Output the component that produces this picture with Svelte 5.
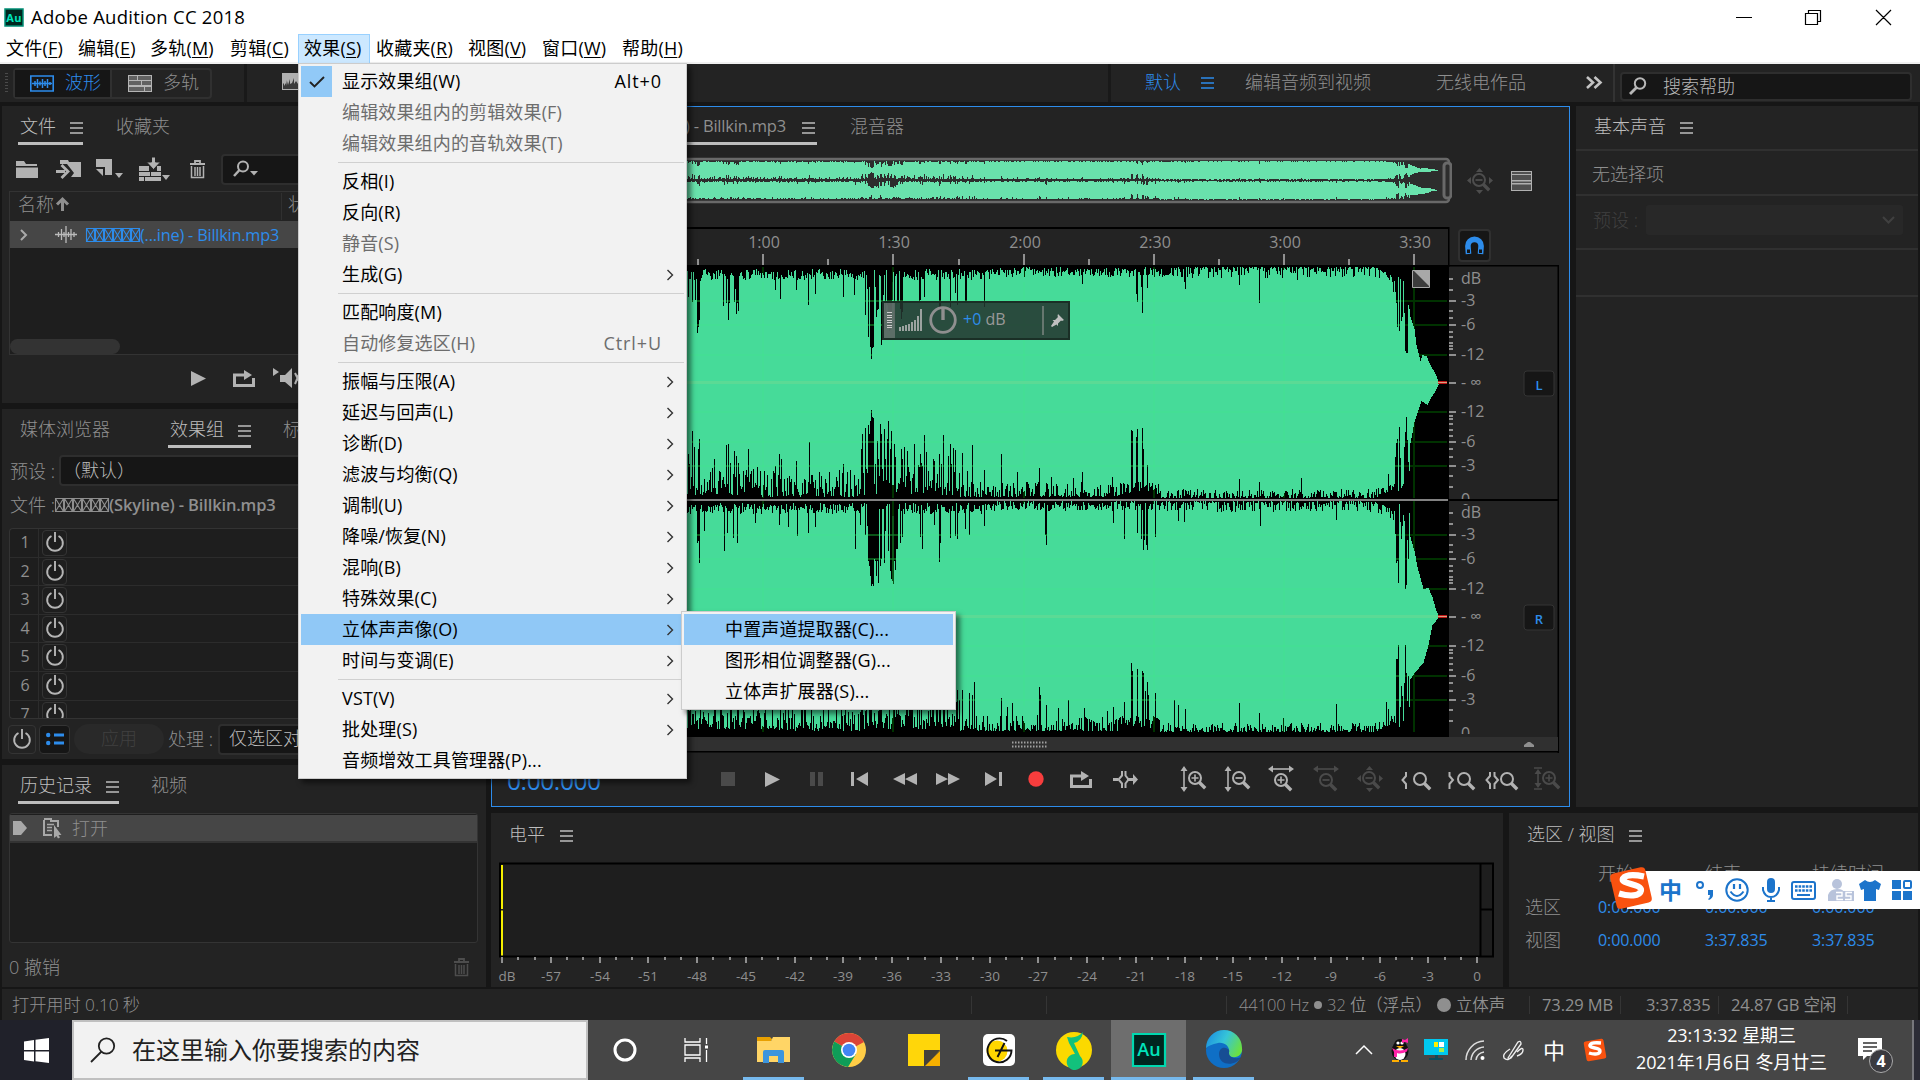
<script>
  const menubar = [['文件', 'F'], ['编辑', 'E'], ['多轨', 'M'], ['剪辑', 'C'], ['效果', 'S'], ['收藏夹', 'R'], ['视图', 'V'], ['窗口', 'W'], ['帮助', 'H']];

  // t: label, k: shortcut, off: disabled, sub: has submenu
  const effectsMenu = [
    { t: '显示效果组(W)', k: 'Alt+0', check: true },
    { t: '编辑效果组内的剪辑效果(F)', off: true },
    { t: '编辑效果组内的音轨效果(T)', off: true },
    null,
    { t: '反相(I)' }, { t: '反向(R)' }, { t: '静音(S)', off: true }, { t: '生成(G)', sub: true },
    null,
    { t: '匹配响度(M)' }, { t: '自动修复选区(H)', k: 'Ctrl+U', off: true },
    null,
    { t: '振幅与压限(A)', sub: true }, { t: '延迟与回声(L)', sub: true }, { t: '诊断(D)', sub: true },
    { t: '滤波与均衡(Q)', sub: true }, { t: '调制(U)', sub: true }, { t: '降噪/恢复(N)', sub: true },
    { t: '混响(B)', sub: true }, { t: '特殊效果(C)', sub: true }, { t: '立体声声像(O)', sub: true, hot: true },
    { t: '时间与变调(E)', sub: true },
    null,
    { t: 'VST(V)', sub: true }, { t: '批处理(S)', sub: true }, { t: '音频增效工具管理器(P)...' }
  ];
  const submenu = ['中置声道提取器(C)...', '图形相位调整器(G)...', '立体声扩展器(S)...'];

  const lens = (x, y, r = 6) => `<circle cx="${x}" cy="${y}" r="${r}" fill="none" stroke="currentColor" stroke-width="2"/><path d="M${x + r * .7} ${y + r * .7}l6 6" stroke="currentColor" stroke-width="3.4"/>`;
  const plus = (x, y) => `<path d="M${x - 3.5} ${y}h7M${x} ${y - 3.5}v7" stroke="currentColor" stroke-width="1.6"/>`;
  const minus = (x, y) => `<path d="M${x - 3.5} ${y}h7" stroke="currentColor" stroke-width="1.8"/>`;
  const vArrow = '<path d="M4 4v18" stroke="currentColor" stroke-width="1.6"/><path d="M4 0l3.5 5h-7zM4 26l3.5-5h-7z" fill="currentColor"/>';
  const hArrow = '<path d="M4 3h18" stroke="currentColor" stroke-width="1.6"/><path d="M0 3l5-3.5v7zM26 3l-5-3.5v7z" fill="currentColor"/>';
  const icons = {
    burger: [13, 12, '<path d="M0 1h13M0 6h13M0 11h13" stroke="currentColor" stroke-width="1.6"/>'],
    wave: [24, 17, '<path d="M0 1h24M0 16h24M.8 1v15M23.2 1v15" stroke="currentColor" stroke-width="1.6"/><path d="M2 8.500h20M5 6v5M7.500 4v9M10 6.500v4M12.500 4v9M15 6v5M17.500 4v9M20 7v3" stroke="currentColor" stroke-width="1.500"/>'],
    multi: [24, 17, '<path d="M0 0h24v17H0z" fill="#b5b5b5"/><path d="M1 1h8v4H1zM10 1h13v4H10zM1 6h12v4H1zM14 6h9v4h-9zM1 12h15v4H1zM17 12h6v4h-6z" fill="#616161"/>'],
    folder: [22, 17, '<path d="M0 0h8l2 3h11v2H0zM0 6.500h22V17H0z" fill="currentColor"/>'],
    importer: [25, 18, '<path d="M4 0h8l1 2h12v15H15l3-4-7-9H4z" fill="currentColor"/><path d="M0 11.500h9M5.500 5l6.500 6.500L5.500 18" fill="none" stroke="currentColor" stroke-width="2.800"/>'],
    newfile: [27, 20, '<path d="M0 0h16v16H9V8H0zM0 10h7v7zM19 14h8l-4 5z" fill="currentColor"/>'],
    insert: [31, 24, '<path d="M0 9h10v5H0zM18 9h4v5h-4zM0 15h11v4H0zM12 15h10v4H12zM0 20h5v4H0zM6 20h16v4H6z" fill="currentColor"/><path d="M12.500 0h4v5h5l-7 7.500-7-7.500h5z" fill="currentColor" stroke="#232323"/><path d="M23 18h8l-4 5z" fill="currentColor"/>'],
    trash: [17, 19, '<path d="M1 4h15M6 3.500V1h5v2.500" fill="none" stroke="currentColor" stroke-width="1.800"/><path d="M2.500 6v11.500h12V6M6 7v9M8.500 7v9M11 7v9" fill="none" stroke="currentColor" stroke-width="1.500"/>'],
    find: [26, 18, '<circle cx="10" cy="6.500" r="5" fill="none" stroke="currentColor" stroke-width="2"/><path d="M6.500 10L1 16" stroke="currentColor" stroke-width="2.500"/><path d="M17 11h8l-4 4.500z" fill="currentColor"/>'],
    search: [18, 18, '<circle cx="11" cy="6.500" r="5.200" fill="none" stroke="currentColor" stroke-width="2"/><path d="M7.500 10.500L1 17" stroke="currentColor" stroke-width="2.800"/>'],
    clip: [22, 17, '<path d="M0 8.500h22M3.500 6v5M6.500 3v11M9 6v5M11 0v17M13.500 6v5M16 3v11M19 6v5" stroke="currentColor" stroke-width="1.300"/>'],
    play: [15, 15, '<path d="M0 0l15 7.500L0 15z" fill="currentColor"/>'],
    loop: [22, 17, '<path d="M7 5H1.500v10.500h19V8" fill="none" stroke="currentColor" stroke-width="3"/><path d="M7 3.500h4V0l8 5-8 5V6.500H7z" fill="currentColor"/>'],
    speaker: [30, 20, '<path d="M0 0l6 4-6 4zM7 7h5l7-7v20l-7-6H7z" fill="currentColor"/><path d="M22 5l5 10M27 4l-5 12" stroke="currentColor" stroke-width="2"/>'],
    power: [18, 20, '<path d="M5.500 4A7.800 7.800 0 1 0 12.500 4" fill="none" stroke="currentColor" stroke-width="1.900"/><path d="M9 0v10" stroke="currentColor" stroke-width="1.900"/>'],
    list: [18, 12, '<circle cx="2.200" cy="2" r="2.200" fill="currentColor"/><circle cx="2.200" cy="10" r="2.200" fill="currentColor"/><path d="M8 2h10M8 10h10" stroke="currentColor" stroke-width="3"/>'],
    here: [14, 14, '<path d="M0 0h8l6 7-6 7H0z" fill="currentColor"/>'],
    history: [18, 20, '<path d="M1 2v15h8M1 1h7v2h7v6" fill="none" stroke="currentColor" stroke-width="2"/><path d="M4 6.500h7M4 9.500h5M4 12.500h5" stroke="currentColor" stroke-width="1.500"/><path d="M11 7v13l2.500-2 1.500 2.500 2-1-1.500-2.500h3z" fill="currentColor"/>'],
    stop: [14, 14, '<path d="M0 0h14v14H0z" fill="currentColor"/>'],
    pause: [13, 14, '<path d="M0 0h5v14H0zM8 0h5v14H8z" fill="currentColor"/>'],
    prev: [17, 14, '<path d="M0 0h3v14H0zM17 0v14L5 7z" fill="currentColor"/>'],
    next: [17, 14, '<path d="M14 0h3v14h-3zM0 0v14l12-7z" fill="currentColor"/>'],
    rew: [24, 12, '<path d="M12 0v12L0 6zM24 0v12L12 6z" fill="currentColor"/>'],
    ff: [24, 12, '<path d="M0 0v12l12-6zM12 0v12l12-6z" fill="currentColor"/>'],
    rec: [16, 16, '<circle cx="8" cy="8" r="7.700" fill="#f73d3d"/>'],
    skip: [25, 18, '<path d="M0 8h5v3H0zM14 8h6V4l5 5.500-5 5.500v-4h-6z" fill="currentColor"/><path d="M9 1v4.500L5.500 9.500 9 13.500V18M12.500 1v4.500l3 4-3 4V18" fill="none" stroke="currentColor" stroke-width="2"/>'],
    zinV: [26, 26, vArrow + lens(15, 12) + plus(15, 12)],
    zoutV: [26, 26, vArrow + lens(15, 12) + minus(15, 12)],
    zinH: [27, 26, hArrow + lens(13, 14) + plus(13, 14)],
    zoutH: [27, 26, hArrow + lens(13, 14) + minus(13, 14)],
    zfull: [26, 26, '<path d="M12.500 0l3.500 4H9zM12.500 26l3.500-4H9zM0 12.500l4-3.500v7zM26 12.500L22 9v7z" fill="currentColor"/>' + lens(12, 12) + minus(12, 12)],
    zselL: [30, 26, '<path d="M5 6v4L1.500 14 5 18v5" fill="none" stroke="currentColor" stroke-width="2"/>' + lens(19, 13)],
    zselR: [27, 26, '<path d="M1.500 6v4L5 14l-3.500 4v5" fill="none" stroke="currentColor" stroke-width="2"/>' + lens(16, 13)],
    zsel: [34, 26, '<path d="M5 6v4L1.500 14 5 18v5M9.500 6v4l3.500 4-3.500 4v5" fill="none" stroke="currentColor" stroke-width="2"/>' + lens(22, 13)],
    zinF: [26, 26, '<path d="M0 2h8M0 23h8M4 5v14" stroke="currentColor" stroke-width="1.600"/><path d="M4 3l3.500 5h-7zM4 22l3.500-5h-7z" fill="currentColor"/>' + lens(15, 12) + plus(15, 12)],
    tracks: [21, 20, '<path d="M0 0h21v20H0z" fill="#b0b0b0"/><path d="M1 1h19v2H1zM1 4h19v5H1zM1 10.500h19v1.500H1zM1 13.500h19v5.500H1z" fill="#505050"/>'],
    more: [16, 13, '<path d="M1 1l6 5.500L1 12M8.500 1l6 5.500-6 5.500" fill="none" stroke="currentColor" stroke-width="2.600"/>'],
    magnet: [19, 19, '<path d="M3.500 18l-.6-8a6.600 6.600 0 0 1 13.200 0l-.6 8" fill="none" stroke="currentColor" stroke-width="5.600"/><path d="M2 13.500h3V17H2zM14 13.500h3V17h-3z" fill="#161616"/>'],
    down: [13, 8, '<path d="M1 1l5.500 5.500L12 1" fill="none" stroke="currentColor" stroke-width="2"/>'],
    arrow: [8, 12, '<path d="M1.500 1L6.500 6l-5 5" fill="none" stroke="#333" stroke-width="1.400"/>'],
    check: [16, 12, '<path d="M1 6l4.500 4.500L15 1" fill="none" stroke="#222" stroke-width="1.900"/>'],
    twist: [8, 12, '<path d="M1 1l5 5-5 5" fill="none" stroke="#aaa" stroke-width="2"/>'],
    up: [13, 14, '<path d="M6.500 14V3M1 7.500L6.500 2 12 7.500" fill="none" stroke="currentColor" stroke-width="3"/>'],
    spectral: [24, 17, '<path d="M0 0h24v17H0z" fill="#b0b0b0"/><path d="M1 16v-5l1-1v3l2-3v3l1-6v5l1-4v4l2-6v5l2-1 2-5v6l2-3 2 3v5z" fill="#3a3a3a"/>'],
    box: [9, 14, '<path d="M.5.5h8v13h-8zM.5.5l8 13M8.500.5l-8 13" fill="none" stroke="currentColor" stroke-width="1.100"/>'],
    meter: [23, 22, '<path d="M1 22v-4M4 22v-5M7 22v-6M10 22v-7M13 22v-9M16 22v-11M19 22V7M22 22V0" stroke="#b9b9b9" stroke-width="1.600"/>'],
    knob: [28, 28, '<circle cx="14" cy="14" r="12.300" fill="none" stroke="#8f8f8f" stroke-width="2.800"/><path d="M14 1v13" stroke="#8f8f8f" stroke-width="3.400"/>'],
    pin: [13, 13, '<path d="M7 0l6 6-2 1-1-.5-3 3v2.500L5.500 10.500 1 13l-1-1 3-4.500L1.500 6h2.500l3-3-.5-1z" fill="#c0c0c0"/>'],
    win: [25, 25, '<path d="M0 3.500L10 2v10H0zM11.500 1.800L25 0v12H11.500zM0 13.500h10v10L0 22zM11.500 13.500H25V25l-13.500-1.800z" fill="#fff"/>'],
    glass: [26, 26, '<circle cx="16.500" cy="9" r="7.700" fill="none" stroke="#222" stroke-width="1.800"/><path d="M11.500 14.500L1 25" stroke="#222" stroke-width="1.800"/>'],
    cortana: [24, 24, '<circle cx="12" cy="12" r="10" fill="none" stroke="#fff" stroke-width="3"/>'],
    taskview: [25, 24, '<path d="M1 0v4h15V0M1 24v-4h15v4M1 7h15v10H1zM22.500 0v6M22.500 12v12" fill="none" stroke="#fff" stroke-width="1.300"/><path d="M21 7.500h3v3h-3z" fill="#fff"/>'],
    explorer: [33, 28, '<path d="M0 1h13l3 3h-2v4H0z" fill="#e8a000"/><path d="M0 5h14l2-4h17v25H0z" fill="#ffd566"/><path d="M6 27V16q0-2 2-2h17q2 0 2 2v11h-6v-7h-9v7z" fill="#3d95dd"/>'],
    chrome: [34, 34, '<circle cx="17" cy="17" r="17" fill="#ffcd46"/><path d="M17 17L2.300 8.500A17 17 0 0 1 31.700 8.500L32 9z" fill="#db4437"/><path d="M17 17L2.300 8.500A17 17 0 0 0 16 34l8-13z" fill="#0f9d58"/><circle cx="17" cy="17" r="8" fill="#fff"/><circle cx="17" cy="17" r="6.300" fill="#4285f4"/>'],
    notes: [32, 32, '<path d="M0 0h32v16l-16 16H0z" fill="#ffd60a"/><path d="M16 16h16L18 32h-2z" fill="#45413a"/><path d="M32 17v15H17z" fill="#f6b000"/>'],
    gapp: [32, 32, '<rect width="32" height="32" rx="5" fill="#fff"/><circle cx="14" cy="17" r="10.500" fill="#ffd700"/><path d="M24 7A12 12 0 1 0 28.500 16.500H12M21.500 9l-7 14" fill="none" stroke="#111" stroke-width="1.900"/>'],
    music: [36, 36, '<circle cx="18" cy="18" r="18" fill="#fbd900"/><path d="M11 5q10 2 16-5-1 9-9 11l6 13a8 8 0 1 1-5-2l-6-11z" fill="#12c17c"/>'],
    au: [34, 34, '<path d="M1 1h32v32H1z" fill="#00261f" stroke="#00d9b0" stroke-width="2.200"/><text x="17" y="23" text-anchor="middle" font-family="Open Sans, sans-serif" font-size="18" font-weight="600" fill="#00e4bb">Au</text>'],
    auS: [20, 19, '<path d="M1 1h18v17H1z" fill="#00261f" stroke="#008f75" stroke-width="1.500"/><text x="10" y="13.500" text-anchor="middle" font-family="Open Sans, sans-serif" font-size="11" font-weight="700" fill="#00e4bb">Au</text>'],
    edge: [38, 36, '<defs><linearGradient id="eg" x1="0" y1=".2" x2="1" y2=".6"><stop offset="0" stop-color="#1b8ee0"/><stop offset=".5" stop-color="#36c5d8"/><stop offset="1" stop-color="#6be040"/></linearGradient></defs><circle cx="19" cy="18" r="18" fill="#0f6fc6"/><path d="M1 16A18 18 0 0 1 37 16c1 6-4 10-10 9-4-1-4-3-3-5 1-6-5-10-11-9C7 12 3 14 1 16z" fill="url(#eg)"/><path d="M14 22c0-5 4-8 9-5 2 1 1 3 1 4 0 4 6 7 12 4-4 9-22 10-22-3z" fill="#174e94"/>'],
    chevUp: [18, 10, '<path d="M1 9l8-8 8 8" fill="none" stroke="#fff" stroke-width="1.500"/>'],
    qq: [20, 24, '<ellipse cx="10" cy="13" rx="8.500" ry="9.500" fill="#111"/><circle cx="10" cy="7" r="6" fill="#111"/><ellipse cx="10" cy="16" rx="5.500" ry="6" fill="#fff"/><circle cx="8" cy="5" r="1.600" fill="#fff"/><circle cx="12" cy="5" r="1.600" fill="#fff"/><path d="M6 8h8l-4 2.500zM2 22h7v2H2zM11 22h7v2h-7z" fill="#ffae00"/><path d="M2 10q8 5 16 0l-1 3.500q-6 3-10 1.500v4H4v-5zM12 1l3 1 3-2v5l-3-1-3 1z" fill="#ff22a8"/>'],
    monitor: [24, 22, '<path d="M0 0h24v16H0z" fill="#00c8ef"/><path d="M10 3h4v5h-4z" fill="#fff200"/><path d="M15 3h5v5h-5z" fill="#fff"/><path d="M15 9h5v4h-5z" fill="#a4ee4b"/><path d="M11 16h3v3h5v2H5v-2h6z" fill="#0b4c5e"/>'],
    wifi: [20, 20, '<path d="M1 20A19 19 0 0 1 19 1M6 20A14 14 0 0 1 19 7M11 20a9 9 0 0 1 8-8" fill="none" stroke="#ddd" stroke-width="1.500"/><circle cx="17.500" cy="18" r="2" fill="#fff"/>'],
    pen: [22, 21, '<path d="M5 18L15 2q3-2 3 2L8 18q-3 2-3 0zM7 9Q-1 14 1 18q4 4 8-2M14 12q6-6 6-2t-6 6" fill="none" stroke="#eee" stroke-width="1.400"/>'],
    bubble: [24, 22, '<path d="M0 0h24v18H9l-4 4v-4H0z" fill="#fff"/><path d="M5 5h14M5 9h14M5 13h9" stroke="#333" stroke-width="1.500"/>'],
    sogou: [44, 42, '<rect x="4" y="3" width="36" height="36" rx="4" transform="rotate(-13 22 21)" fill="#f9520f"/><path d="M35 9.500q-17-3.500-21 2c-3 6 19 5 18 12-1 6-12 6-22 3" fill="none" stroke="#fff" stroke-width="6.200"/>'],
    sogouS: [24, 24, '<rect x="2" y="2" width="20" height="20" rx="2" transform="rotate(-10 12 12)" fill="#f9520f"/><path d="M18 5Q8 4 7 7c-1 4 10 2 10 6 0 3-5 4-11 2" fill="none" stroke="#fff" stroke-width="3.400"/>'],
    punct: [18, 18, '<circle cx="4" cy="4" r="3" fill="none" stroke="#1c74cb" stroke-width="2"/><path d="M12 9h5v5q0 3-4 5l-1-1q2-1 2-4h-2z" fill="#1c74cb"/>'],
    smile: [24, 24, '<circle cx="12" cy="12" r="10.700" fill="none" stroke="#1c74cb" stroke-width="2"/><path d="M9 6v5M15 6v5" stroke="#1c74cb" stroke-width="2.200"/><path d="M5.500 13.500q6.500 9 13 0" fill="none" stroke="#1c74cb" stroke-width="2"/>'],
    mic: [18, 24, '<rect x="5" width="8" height="15" rx="4" fill="#1c74cb"/><path d="M1 9v3q2 7 8 7t8-7V9M9 19v4M5 23h8" fill="none" stroke="#1c74cb" stroke-width="2"/>'],
    keyb: [25, 19, '<rect x="1" y="1" width="23" height="17" rx="2" fill="none" stroke="#1c74cb" stroke-width="2"/><path d="M4 5.500h17M4 9.500h17" stroke="#1c74cb" stroke-width="2.500" stroke-dasharray="2.600 1"/><path d="M6 14h13" stroke="#1c74cb" stroke-width="2"/>'],
    person: [27, 22, '<circle cx="10" cy="5" r="5" fill="#b8c3db"/><path d="M1 22V16q2-6 9-6t7 4v8z" fill="#b8c3db"/><path d="M7 12h20v10H7z" fill="#b8c3db"/><path d="M9 13.500h6v3.500h-5v3.500h6M25 13.500h-6v3.500h5v3.500h-6" fill="none" stroke="#fff" stroke-width="1.400"/>'],
    shirt: [22, 21, '<path d="M6 0q5 4 10 0l6 4-2 6-3-1v12H5V9l-3 1-2-6z" fill="#1c74cb"/>'],
    tiles: [20, 20, '<path d="M0 0h9v9H0zM0 11h9v9H0zM11 11h9v9h-9z" fill="#1c74cb"/><rect x="12" y="1" width="7" height="7" rx="1" fill="none" stroke="#1c74cb" stroke-width="2"/>']
  };

  const transport = [['stop', 1], ['play'], ['pause', 1], ['prev'], ['rew'], ['ff'], ['next'], ['rec'], ['loop'], ['skip'], ['zinV'], ['zoutV'], ['zinH'], ['zoutH', 1], ['zfull', 1], ['zselL'], ['zselR'], ['zsel'], ['zinF', 1]];

  // ---- waveform ----
  let seed = 77;
  const rnd = () => ((seed = (seed * 16807) % 2147483647) / 2147483647);
  const X0 = 503, X1 = 1439;
  const peaks = {
    t1: '688 30 689 12 690 12 692 35 695 33 697 66 698 60 699 53 700 14 723 39 726 36 728 53 729 36 734 35 735 22 736 47 737 36 738 44 775 23 780 32 796 23 808 38 815 27 843 30 854 28 865 48 867 22 868 70 869 20 870 80 871 92 872 81 873 80 875 20 876 50 877 43 878 42 881 78 882 40 883 28 885 45 887 38 888 60 889 64 890 63 891 57 892 33 894 54 897 34 898 35 900 42 901 52 902 45 919 34 920 33 924 30 939 40 940 43 950 40 955 26 957 38 965 35 966 34 984 40 1082 17 1136 27 1137 35 1142 46 1141 20 1147 21 1184 15 1185 22 1239 18 1259 36 1297 13 1392 15 1393 25 1394 14',
    b1: '688 45 689 35 692 68 694 52 699 60 698 50 714 40 720 27 726 54 728 55 730 36 734 48 736 43 738 36 748 50 753 30 757 32 760 28 775 33 779 45 781 40 796 38 809 57 829 27 843 35 854 24 861 50 862 65 865 71 866 30 868 74 869 65 870 78 871 89 872 82 873 81 875 35 877 58 878 40 880 75 881 65 884 70 885 40 887 60 888 78 890 50 891 68 894 55 895 42 901 50 902 40 904 52 907 48 914 55 919 32 920 45 924 64 926 47 933 40 934 38 939 45 943 64 948 43 950 55 953 51 955 49 962 46 967 28 972 54 984 29 1001 45 1017 27 1039 31 1051 22 1073 21 1082 27 1112 22 1131 69 1132 68 1137 70 1136 62 1142 71 1143 50 1147 34 1239 20 1259 17 1301 21 1388 25',
    t2: '697 42 698 40 699 62 704 30 724 50 727 32 733 37 737 42 755 22 779 24 788 26 797 35 808 32 815 26 855 48 860 24 865 34 867 25 868 60 869 65 870 75 871 85 872 83 873 85 874 58 875 60 876 75 877 60 878 82 880 65 881 58 884 62 885 30 888 50 890 70 891 78 892 80 893 83 894 60 895 69 896 48 897 48 900 42 902 36 920 36 922 48 934 24 939 61 940 42 950 37 955 35 957 38 965 28 969 34 984 25 1045 34 1046 44 1113 22 1124 38 1137 32 1141 38 1143 49 1144 39 1146 44 1147 49 1155 36 1178 20 1184 21 1260 25 1336 19 1390 17',
    b2: '689 22 700 26 757 22 802 25 871 60 880 52 940 40 957 43 962 43 969 40 972 38 974 51 1001 35 1007 26 1012 30 1039 46 1040 38 1046 28 1058 25 1068 33 1084 25 1107 22 1113 26 1124 31 1131 70 1132 62 1137 64 1142 62 1143 60 1145 42 1147 51 1148 38 1155 40 1174 33 1178 28 1185 24 1239 30 1259 20 1283 15 1336 29 1386 31 1388 24'
  };
  // y edges (relative to channel top) of the fade-out, per x
  const tail = {
    t1: [[1395, 25], [1396, 36], [1397, 60], [1398, 10], [1399, 64], [1400, 12], [1401, 54], [1402, 50], [1403, 14], [1404, 46], [1405, 84], [1406, 86], [1407, 86], [1408, 38], [1409, 42], [1410, 50], [1414, 62], [1416, 78], [1420, 94], [1422, 88], [1426, 89], [1430, 98], [1434, 105], [1439, 116]],
    b1: [[1395, 190], [1396, 176], [1397, 172], [1398, 224], [1399, 160], [1401, 221], [1403, 217], [1404, 180], [1406, 150], [1408, 195], [1409, 204], [1410, 176], [1414, 155], [1417, 146], [1421, 134], [1427, 138], [1431, 130], [1435, 124], [1439, 116]],
    t2: [[1395, 33], [1396, 62], [1397, 60], [1398, 82], [1399, 3], [1401, 38], [1402, 25], [1403, 14], [1404, 20], [1405, 88], [1406, 84], [1407, 39], [1408, 58], [1409, 12], [1410, 36], [1414, 50], [1417, 66], [1423, 88], [1428, 87], [1432, 96], [1436, 110], [1439, 116]],
    b2: [[1395, 222], [1396, 158], [1397, 158], [1398, 144], [1399, 226], [1401, 185], [1402, 195], [1403, 220], [1405, 144], [1407, 200], [1408, 175], [1409, 206], [1410, 178], [1414, 172], [1423, 162], [1428, 144], [1432, 124], [1439, 116]]
  };
  function edge(id) {
    const bottom = id[0] === 'b';
    const map = {};
    const nums = peaks[id].split(' ').map(Number);
    for (let i = 0; i < nums.length; i += 2) map[nums[i]] = nums[i + 1];
    const out = [];
    for (let x = X0; x < X1; x++) {
      if (x >= 1395) {
        const pts = tail[id];
        let k = 0;
        while (k < pts.length - 2 && pts[k + 1][0] <= x) k++;
        const [xa, ya] = pts[k], [xb, yb] = pts[k + 1];
        out.push(Math.round(ya + (yb - ya) * Math.min(1, (x - xa) / (xb - xa))));
        continue;
      }
      const r = rnd();
      let d;
      if (!bottom) d = x < 990 ? 2 + r * 11 : x < 1180 ? r * 10 : r * r * 11;
      else d = x < 760 ? 4 + r ** 1.5 * 28 : x < 860 ? 2 + r ** 1.6 * 27 : x < 960 ? 4 + r ** 1.3 * 32 : x < 1120 ? 2 + r * r * 16 : x < 1160 ? 5 + r * 12 : 1 + r * r * 9;
      if (x > 1375) d += (x - 1375) * 0.5;
      if (map[x]) d = map[x];
      d = Math.round(d);
      out.push(bottom ? 232 - d : d);
    }
    return out;
  }
  const channels = [[edge('t1'), edge('b1')], [edge('t2'), edge('b2')]];
  const columns = (ch, top, scale) => channels[ch][0].map((t, i) => `M${X0 + i + 0.5} ${(top + t * scale).toFixed(1)}V${(top + Math.max(t + 1, channels[ch][1][i]) * scale).toFixed(1)}`).join('');
  const rulerMarks = [];
  for (let i = 0; i <= 14; i++) rulerMarks.push({ x: Math.round(503 + i * 65.08), big: i % 2 === 0, label: `${Math.floor(i / 4)}:${i % 4 === 2 ? '30' : '00'}` });
  const chanTop = [266, 500];
  const dbLines = [35, 59, 89, 146, 176, 200];
  const dbTicks = [24, 45, 52, 66, 71, 77, 80, 83, 150, 153, 158, 164, 170, 183, 191, 210, 221, 13];
  const dbLabels = [['dB', 13], ['-3', 35], ['-6', 59], ['-12', 89], ['- ∞', 117], ['-12', 146], ['-6', 176], ['-3', 200], ['0', 234]];
  const levelMarks = Array.from({ length: 61 }, (_, i) => ({ x: Math.round(502 + i * 16.25), big: i % 3 === 0, label: i === 0 ? 'dB' : String(i - 60) }));
</script>

{#snippet icon(name)}
  <svg class="ic" width={icons[name][0]} height={icons[name][1]} viewBox="0 0 {icons[name][0]} {icons[name][1]}">{@html icons[name][2]}</svg>
{/snippet}
{#snippet boxes()}<span class="boxes">{#each Array(6) as _}{@render icon('box')}{/each}</span>{/snippet}

<div class="screen">
  <header class="title">{@render icon('auS')}<span>Adobe Audition CC 2018</span>
    <svg class="winbtns" width="160" height="18" viewBox="0 0 160 18"><path d="M1 9.500h16M70.500 5.500h12v11h-12zM73.500 5V2.500h12v11h-3M141 2l15 15M156 2l-15 15" fill="none" stroke="#000" stroke-width="1.200" /></svg>
  </header>
  <nav class="menubar">
    {#each menubar as [t, k]}<span class:open={k === 'S'}>{t}(<u>{k}</u>)</span>{/each}
  </nav>

  <div class="toolbar">
    <i class="grip"></i>
    <div class="modes"><span class="on">{@render icon('wave')}<b>波形</b></span><span>{@render icon('multi')}<b>多轨</b></span></div>
    <div class="spec">{@render icon('spectral')}</div>
    <div class="spaces">
      <b>默认</b><b>{@render icon('burger')}</b><span>编辑音频到视频</span><span>无线电作品</span><em>{@render icon('more')}</em>
    </div>
    <div class="help">{@render icon('search')}<span>搜索帮助</span></div>
  </div>

  <main>
    <div class="left">
      <section class="panel files">
        <div class="tabs"><span class="tab on">文件 {@render icon('burger')}</span><span class="tab">收藏夹</span></div>
        <div class="filetools">
          {@render icon('folder')}{@render icon('importer')}{@render icon('newfile')}{@render icon('insert')}{@render icon('trash')}
          <div class="field">{@render icon('find')}</div>
        </div>
        <div class="filelist">
          <div class="fhead"><span>名称{@render icon('up')}</span><span>状态</span></div>
          <div class="frow">{@render icon('twist')}{@render icon('clip')}<span class="fname">{@render boxes()}(...ine) - Billkin.mp3</span></div>
          <div class="fscroll"></div>
        </div>
        <div class="preview">{@render icon('play')}{@render icon('loop')}{@render icon('speaker')}</div>
      </section>

      <section class="panel rack">
        <div class="tabs"><span class="tab">媒体浏览器</span><span class="tab on">效果组 {@render icon('burger')}</span><span class="tab">标记</span></div>
        <div class="preset"><span>预设 :</span><div class="field">（默认）</div></div>
        <div class="rackfile">文件 :{@render boxes()}<b>(Skyline) - Billkin.mp3</b></div>
        <div class="slots">
          {#each [1, 2, 3, 4, 5, 6, 7] as n}<div class="slot"><span>{n}</span><i>{@render icon('power')}</i></div>{/each}
        </div>
        <div class="apply"><i>{@render icon('power')}</i><i class="sel">{@render icon('list')}</i><span class="pill">应用</span><span>处理 :</span><div class="field">仅选区对象</div></div>
      </section>

      <section class="panel hist">
        <div class="tabs"><span class="tab on">历史记录 {@render icon('burger')}</span><span class="tab">视频</span></div>
        <div class="hlist"><div class="hrow">{@render icon('here')}{@render icon('history')}<span>打开</span></div></div>
        <div class="hfoot"><span>0 撤销</span><em>{@render icon('trash')}</em></div>
      </section>
    </div>

    <div class="right">
      <div class="upper">
        <section class="editor">
          <div class="etabs"><span class="tab on"><span>编辑器: (Skyline) - Billkin.mp3</span>{@render icon('burger')}</span><span class="tab">混音器</span></div>
          <div class="overview">
            <svg width="960" height="47" viewBox="492 157 960 47">
              <rect x="500" y="159" width="949" height="43" rx="3" fill="#2d2d2d" stroke="#696969" stroke-width="2.500" />
              <path d={columns(0, 161, 0.08)} stroke="#69e2ac" shape-rendering="crispEdges" />
              <path d={columns(1, 181, 0.08)} stroke="#69e2ac" shape-rendering="crispEdges" />
              <rect x="1444" y="163" width="7" height="35" rx="3" fill="#2d2d2d" stroke="#696969" stroke-width="3" />
            </svg>
            <em>{@render icon('zfull')}</em>{@render icon('tracks')}
          </div>
          <div class="plot">
            <svg width="1069" height="526" viewBox="492 227 1069 526">
              <rect x="503" y="227" width="946" height="2" fill="#000" />
              <rect x="1448" y="227" width="1.500" height="40" fill="#000" />
              {#each rulerMarks as m}
                <rect x={m.x - 1} y={m.big ? 254 : 259} width="2" height={m.big ? 11 : 6} fill="#909090" />
                {#if m.big}<text x={m.x + 1} y="247.500" text-anchor="middle" class="rul">{m.label}</text>{/if}
              {/each}
              <rect x="503" y="265" width="946" height="472" fill="#000" />
              <rect x="1449" y="265" width="110" height="1.500" fill="#000" />
              <rect x="1557.500" y="265" width="1.500" height="488" fill="#000" />
              {#each chanTop as top, c}
                {#each dbLines as y}<rect x="503" y={top + y - 1} width="944" height="2" fill="#003200" />{/each}
                {#each rulerMarks as m}{#if m.big}<rect x={m.x - 1} y={top + 1} width="2" height="231" fill="#003200" />{/if}{/each}
                <path d={columns(c, top + 1, 1)} stroke="#46db99" shape-rendering="crispEdges" />
                {#each dbLines as y}<rect x="503" y={top + y - 1} width="898" height="2" fill="#3ef086" opacity=".18" />{/each}
                {#each rulerMarks as m}{#if m.big && m.x < 1410}<rect x={m.x - 1} y={top + 16} width="2" height="190" fill="#3ef086" opacity=".18" />{/if}{/each}
                <rect x="503" y={top + 115} width="935" height="3" fill="#5bda95" />
                <rect x="1438" y={top + 115} width="9" height="3" fill="#c01818" /><rect x="1438" y={top + 116} width="9" height="1" fill="#d8a080" />
                {#each dbTicks as y}<rect x="1449" y={top + y - 1} width="4" height="2" fill="#909090" />{/each}
                {#each dbLabels as [t, y], i}
                  {#if i > 0 && i < 8}<rect x="1449" y={top + y - 1} width="7" height="2" fill="#909090" />{/if}
                  <text x="1461" y={top + y + 5} class="db">{t}</text>
                {/each}
              {/each}
              <rect x="1449" y="499" width="109" height="2" fill="#000" />
              <rect x="1457" y="501" width="30" height="3" fill="#232323" />
              <rect x="503" y="499" width="945" height="2" fill="#828282" />
              <rect x="1457" y="734" width="30" height="5" fill="#232323" />
              <rect x="492" y="737" width="1066" height="14" fill="#303030" />
              <rect x="492" y="751" width="1067" height="1.500" fill="#000" />
              <path d="M1012 742.500h35M1012 746.500h35" stroke="#a0a0a0" stroke-width="2" stroke-dasharray="1.500 1.500" />
              <path d="M1524 747v-2l4-3h2l4 3v2z" fill="#909090" />
              <path d="M1412.500 270.500h17v17h-17z" fill="#3c3c3c" stroke="#a8a8a8" /><path d="M1413 270h17v17z" fill="#a8a8a8" />
              <rect x="1524" y="371" width="30" height="25" rx="3" fill="#161616" stroke="#343434" />
              <rect x="1524" y="605" width="30" height="25" rx="3" fill="#161616" stroke="#343434" />
              <text x="1539" y="390" text-anchor="middle" class="lr">L</text><text x="1539" y="624" text-anchor="middle" class="lr">R</text>
            </svg>
          </div>
          <div class="snap">{@render icon('magnet')}</div>
          <div class="hud"><i></i>{@render icon('meter')}{@render icon('knob')}<span><b>+0</b> dB</span><s></s>{@render icon('pin')}</div>
          <div class="transport"><strong>0:00.000</strong>{#each transport as [n, dim]}<span class:dim>{@render icon(n)}</span>{/each}</div>
        </section>
        <section class="panel essential">
          <div class="etitle">基本声音 {@render icon('burger')}</div>
          <div class="none">无选择项</div>
          <div class="epre"><span>预设 :</span><div>{@render icon('down')}</div></div>
          <div class="eline"></div>
        </section>
      </div>
      <div class="lower">
        <section class="panel">
          <div class="ltitle">电平 {@render icon('burger')}</div>
          <svg class="levels" width="1012" height="135" viewBox="491 852 1012 135">
            <path d="M500 863.500h993v93h-993zM1480.500 863v94M1480.500 909.500h12" fill="#1e1e1e" stroke="#000" stroke-width="2" />
            <rect x="501" y="865" width="2" height="44" fill="#f4ee00" /><rect x="501" y="910.500" width="2" height="45" fill="#f4ee00" />
            {#each levelMarks as m}
              <rect x={m.x - 1} y="957" width="2" height={m.big ? 6 : 3} fill="#909090" />
              {#if m.big}<text x={m.label === 'dB' ? 507 : m.x} y="980.500" text-anchor="middle" class="lv">{m.label}</text>{/if}
            {/each}
          </svg>
        </section>
        <section class="panel">
          <div class="stitle">选区 / 视图 {@render icon('burger')}</div>
          <div class="times">
            <span></span><span>开始</span><span>结束</span><span>持续时间</span>
            <span>选区</span><b>0:00.000</b><b>0:00.000</b><b>0:00.000</b>
            <span>视图</span><b>0:00.000</b><b>3:37.835</b><b>3:37.835</b>
          </div>
        </section>
      </div>
    </div>
  </main>

  <footer class="status">
    <span>打开用时 0.10 秒</span><span></span><span></span><span>44100 Hz <i></i> 32 位（浮点） <i class="big"></i> 立体声</span><span>73.29 MB</span><span>3:37.835</span><span>24.87 GB 空闲</span><span></span>
  </footer>

  <div class="taskbar">
    <div class="start">{@render icon('win')}</div>
    <div class="tsearch">{@render icon('glass')}<span>在这里输入你要搜索的内容</span></div>
    <div class="apps">
      {#each ['cortana', 'taskview', 'explorer', 'chrome', 'notes', 'gapp', 'music', 'au', 'edge'] as a}
        <div class="app" class:task={a === 'taskview'} class:run={['explorer', 'gapp', 'music', 'edge', 'au'].includes(a)} class:active={a === 'au'}>{@render icon(a)}</div>
      {/each}
    </div>
    <div class="tray">
      {@render icon('chevUp')}{@render icon('qq')}{@render icon('monitor')}{@render icon('wifi')}{@render icon('pen')}<span>中</span>{@render icon('sogouS')}
    </div>
    <div class="clock"><span>23:13:32 星期三</span><span>2021年1月6日 冬月廿三</span></div>
    <div class="notify">{@render icon('bubble')}<b>4</b></div>
    <div class="peek"></div>
  </div>

  <div class="menu">
    {#each effectsMenu as m}
      {#if m}
        <div class="item" class:off={m.off} class:hot={m.hot}>
          <i class:check={m.check}>{#if m.check}{@render icon('check')}{/if}</i><span>{m.t}</span>
          {#if m.k}<kbd>{m.k}</kbd>{/if}{#if m.sub}<em>{@render icon('arrow')}</em>{/if}
        </div>
      {:else}<hr />{/if}
    {/each}
  </div>
  <div class="menu sub">
    {#each submenu as s, i}<div class="item" class:hot={i === 0}><i></i><span>{s}</span></div>{/each}
  </div>

  <div class="ime">
    <div class="logo">{@render icon('sogou')}</div>
    <span>中</span>{@render icon('punct')}{@render icon('smile')}{@render icon('mic')}{@render icon('keyb')}{@render icon('person')}{@render icon('shirt')}{@render icon('tiles')}
  </div>
</div>

<style>
  :global(body) { margin: 0; overflow: hidden; }
  .screen { position: relative; width: 1920px; height: 1080px; overflow: hidden; display: flex; flex-direction: column; background: #161616; color: #8f8f8f; font: 300 18px/22px 'Open Sans', 'Noto Sans CJK SC', sans-serif; white-space: nowrap; text-spacing-trim: space-all; }
  .screen * { box-sizing: border-box; }
  .ic { display: block; flex: none; overflow: visible; }
  b, strong, em, i, s { font-weight: inherit; font-style: normal; text-decoration: none; }

  .title { height: 34px; flex: none; background: #fff; color: #000; display: flex; align-items: center; padding: 0 25px 0 4px; font-weight: 400; font-size: 18.500px; letter-spacing: .25px; }
  .title span { margin-left: 7px; flex: 1; }
  .menubar { height: 30px; flex: none; background: #fff; border-bottom: 2px solid #f0f0f0; color: #000; display: grid; grid-template-columns: 72px 72px 80px 74px 72px 92px 74px 80px 76px; font-weight: 400; letter-spacing: .2px; line-height: 28px; }
  .menubar span { padding-left: 6px; height: 30px; }
  .menubar u { text-underline-offset: 2px; text-decoration-thickness: 1px; }
  .menubar .open { background: #cce8ff; border: 1px solid #99d1ff; padding-left: 5px; line-height: 26px; }

  .toolbar { height: 38px; flex: none; background: #232323; display: flex; align-items: center; position: relative; }
  .grip { width: 3px; height: 20px; margin-left: 5px; background: repeating-linear-gradient(#4a4a4a 0 1px, #232323 1px 3px); }
  .modes { margin-left: 5px; width: 199px; height: 31px; border: 2px solid #303030; border-radius: 4px; display: grid; grid-template-columns: 97px 1fr; }
  .modes span { display: flex; align-items: center; gap: 11px; padding-left: 15px; }
  .modes span b { margin-top: -2px; }
  .modes span + span { padding-left: 16px; }
  .modes .on { background: #161616; color: #2d8ceb; border-right: 2px solid #303030; }
  .spec { margin-left: 32px; border-left: 3px solid #191919; height: 38px; padding: 9px 0 0 35px; width: 867px; border-right: 3px solid #191919; overflow: hidden; }
  .spaces { width: 504px; height: 38px; display: grid; grid-template-columns: 56px 44px 191px 150px 30px; align-items: center; padding: 0 0 2px 34px; border-right: 2px solid #333; }
  .spaces b { color: #2d8ceb; } .spaces em { color: #c4c4c4; padding-top: 1px; } .spaces b .ic { margin-top: 2px; }
  .help { margin-left: 5px; margin-top: 6px; width: 292px; height: 29px; background: #161616; border: 2px solid #2e2e2e; border-radius: 4px; display: flex; align-items: center; gap: 16px; padding-left: 7px; color: #b8b8b8; }

  main { height: 885px; flex: none; padding: 4px 2px 0 2px; display: flex; gap: 5px; }
  .panel { background: #232323; overflow: hidden; }
  .left { width: 484px; display: flex; flex-direction: column; gap: 6px; }
  .files { height: 297px; } .rack { height: 350px; } .hist { height: 222px; }
  .tabs { display: flex; height: 39px; padding: 4px 0 0 16px; }
  .tab { height: 35px; display: flex; align-items: center; gap: 14px; border-bottom: 3px solid transparent; }
  .tab .ic { margin-top: 3px; }
  .tab.on { color: #bdbdbd; border-color: #bdbdbd; padding: 0 0 0 2px; }
  .files .tab:last-child { margin-left: 33px; }
  .files .tab.on { width: 65px; }
  .rack .tab:first-child { margin-left: 2px; width: 148px; }
  .rack .tab:last-child { margin-left: 32px; }
  .hist .tab:last-child { margin-left: 32px; }
  .filetools { height: 46px; display: grid; grid-template-columns: 40px 40px 43px 50px 32px 1fr; align-items: center; padding: 2px 0 0 14px; color: #b2b2b2; }
  .field { height: 31px; border: 2px solid #2e2e2e; border-radius: 4px; background: #161616; display: flex; align-items: center; padding-left: 10px; }
  .filelist { margin-left: 7px; height: 164px; border: 1px solid #333; border-right: 0; background: #1e1e1e; display: flex; flex-direction: column; justify-content: space-between; }
  .fhead { height: 29px; background: #232323; display: grid; grid-template-columns: 271px 1fr; align-items: center; }
  .fhead span { display: flex; gap: 2px; padding: 0 0 5px 8px; } .fhead .ic { margin-top: 4px; }
  .fhead span + span { border-left: 1px solid #303030; padding-left: 6px; }
  .frow { height: 27px; background: #464646; display: grid; grid-template-columns: 35px 31px 1fr; align-items: center; padding-left: 10px; color: #bbb; margin-bottom: auto; }
  .fname { color: #2d8ceb; font-weight: 500; font-size: 16.300px; letter-spacing: -.2px; display: flex; align-items: center; }
  .boxes { display: inline-flex; }
  .fscroll { width: 110px; height: 15px; border-radius: 8px; background: #333; }
  .preview { height: 46px; display: grid; grid-template-columns: 42px 40px 40px; align-items: center; padding: 0 0 0 189px; color: #b2b2b2; }

  .preset { display: grid; grid-template-columns: 49px 1fr; align-items: center; height: 45px; padding: 0 0 0 8px; }
  .preset .field, .apply .field { color: #bdbdbd; padding: 0 0 2px 2px; }
  .rackfile { height: 35px; padding: 1px 0 0 8px; display: flex; align-items: flex-start; line-height: 22px; }
  .rackfile .boxes { margin-top: 4px; }
  .rackfile b { font-weight: 600; font-size: 16.500px; letter-spacing: -.15px; }
  .slots { margin-left: 7px; height: 191px; border: 1px solid #333; border-right: 0; background: #1e1e1e; overflow: hidden; border-radius: 4px 0 0 4px; }
  .slot { height: 28.600px; border-bottom: 1px solid #2c2c2c; display: grid; grid-template-columns: 29px 1fr; align-items: center; font-weight: 400; font-size: 16px; }
  .slot span { text-align: center; border-right: 1px solid #2c2c2c; padding-left: 2px; height: 28px; line-height: 26px; }
  .slot i { width: 25px; height: 26px; margin-left: 3px; border: 1px solid #343434; border-radius: 4px; display: grid; place-items: center; color: #b5b5b5; padding-bottom: 2px; }
  .apply { height: 40px; display: grid; grid-template-columns: 31px 35px 94px 50px 1fr; align-items: center; padding-left: 6px; }
  .apply i { width: 28px; height: 29px; border: 1px solid #343434; border-radius: 4px; display: grid; place-items: center; color: #b5b5b5; }
  .apply .sel { width: 31px; color: #2d8ceb; background: #161616; }
  .pill { width: 90px; height: 30px; line-height: 29px; border-radius: 15px; background: #292929; color: #404040; text-align: center; }
  .apply .field { padding-left: 9px; }
  .hlist { margin: 9px 8px 0 7px; height: 130px; border: 1px solid #343434; border-radius: 3px; background: #1e1e1e; padding-top: 1px; }
  .hrow { height: 28px; background: #464646; border-bottom: 2px solid #333; display: grid; grid-template-columns: 30px 29px 1fr; align-items: center; padding-left: 3px; color: #a8a8a8; }
  .hrow span { color: #8f8f8f; }
  .hfoot { display: flex; justify-content: space-between; padding: 13px 16px 0 7px; } .hfoot em { color: #4d4d4d; padding-top: 2px; }

  .right { width: 1427px; display: flex; flex-direction: column; gap: 6px; }
  .upper { display: flex; gap: 6px; height: 701px; }
  .editor { width: 1079px; border: 1px solid #2d8ceb; background: #232323; position: relative; overflow: hidden; }
  .etabs { display: flex; height: 50px; padding-top: 3px; }
  .etabs .tab.on { width: 325px; justify-content: flex-end; padding-right: 2px; gap: 16px; }
  .etabs .tab.on span { font-weight: 500; font-size: 16.500px; letter-spacing: -.2px; color: #8f8f8f; }
  .etabs .tab:last-child { margin-left: 33px; }
  .overview { height: 70px; display: grid; grid-template-columns: 975px 44px 1fr; align-items: center; padding-bottom: 23px; color: #4d4d4d; }
  .overview em { margin-top: -1px; }
  .overview .ic:last-child { margin-top: 1px; }
  .plot { height: 526px; }
  .rul, .db, .lv { font-family: 'Open Sans', sans-serif; font-weight: 400; fill: #8f8f8f; }
  .rul { font-size: 16px; } .db { font-size: 16px; } .lv { font-size: 13.500px; }
  .lr { font: 600 13px 'Open Sans', sans-serif; fill: #2d8ceb; }
  .snap { position: absolute; left: 966px; top: 122px; width: 33px; height: 33px; border: 2px solid #303030; border-radius: 4px; background: #161616; color: #2d8ceb; display: grid; place-items: center; }
  .hud { position: absolute; left: 390px; top: 194px; width: 188px; height: 39px; background: rgba(36, 52, 46, .86); border: 2px solid rgba(24, 44, 36, .9); display: flex; align-items: center; padding-bottom: 1px; }
  .hud i { width: 11px; height: 35px; background: rgba(110, 122, 117, .75); margin-right: 4px; display: grid; place-items: center; }
  .hud i::before { content: ''; width: 5px; height: 16px; background: repeating-linear-gradient(#ccc 0 1px, transparent 1px 2.500px); }
  .hud .ic + .ic { margin-left: 7px; } .hud span { margin-left: 6px; width: 79px; font-size: 16px; font-weight: 400; color: #999; margin-top: -3px; }
  .hud b { color: #2d8ceb; } .hud s { width: 2px; height: 29px; background: #66776f; margin-right: 7px; }
  .transport { height: 52px; display: grid; grid-template-columns: 211px 44px 44px 43px 46px 43px 45px 43px 45px 44px 68px 44px 44px 45px 44px 46px 45px 41px 45px 44px; align-items: center; color: #b2b2b2; }
  .transport span { display: grid; place-items: center; width: 50px; } .transport .dim { color: #4a4a4a; }
  .transport strong { color: #2d8ceb; font-size: 24.500px; font-weight: 400; padding: 4px 0 0 15px; letter-spacing: -.4px; }

  .essential { width: 342px; }
  .etitle { height: 45px; display: flex; align-items: center; gap: 14px; padding: 0 0 3px 18px; color: #bdbdbd; border-bottom: 2px solid #303030; }
  .etitle .ic { margin-top: 3px; }
  .none { height: 45px; line-height: 46px; padding-left: 16px; border-bottom: 2px solid #303030; }
  .epre { height: 54px; display: grid; grid-template-columns: 53px 257px; align-items: center; padding: 0 0 4px 17px; border-bottom: 2px solid #303030; color: #404040; }
  .epre div { height: 30px; background: #282828; border-radius: 3px; display: flex; align-items: center; justify-content: flex-end; padding-right: 8px; }
  .eline { height: 47px; border-bottom: 2px solid #303030; }

  .lower { display: flex; gap: 6px; height: 174px; } .lower section:first-child { width: 1012px; } .lower section:last-child { width: 409px; }
  .ltitle, .stitle { height: 39px; display: flex; gap: 15px; align-items: center; color: #bdbdbd; padding: 3px 0 0 18px; } .stitle { gap: 14px; }
  .ltitle .ic, .stitle .ic { margin-top: 3px; }
  .levels { display: block; }
  .times { display: grid; grid-template-columns: 73px 107px 107px 1fr; grid-template-rows: 42px 26px 40px; align-items: center; padding-left: 16px; }
  .times b { color: #2d8ceb; font-size: 16px; font-weight: 400; letter-spacing: -.1px; }

  .status { height: 31px; flex: none; margin: 2px 2px 0; background: #232323; display: grid; grid-template-columns: 969px 75px 180px 303px 91px 98px 129px 1fr; align-items: center; font-weight: 400; font-size: 16.500px; letter-spacing: -.1px; }
  .status span { height: 18px; line-height: 18px; border-left: 1px solid #353535; padding-left: 12px; display: flex; align-items: center; gap: 5px; }
  .status span:first-child { border: 0; padding-left: 10px; font-size: 17.300px; font-weight: 300; }
  .status span:nth-child(4) { font-weight: 350; }
  .status span:nth-child(6) { padding-left: 25px; }
  .status i { width: 8px; height: 8px; border-radius: 50%; background: #8f8f8f; } .status .big { width: 14px; height: 14px; }

  .taskbar { height: 60px; flex: none; background: #464646; display: flex; color: #fff; font-weight: 400; }
  .start { width: 72px; background: #20212a; display: grid; place-items: center; }
  .tsearch { width: 516px; background: #f2f2f2; border: 2px solid #c0c0c0; color: #222; font-size: 24px; display: flex; align-items: center; gap: 16px; padding-left: 16px; }
  .apps { display: grid; grid-template-columns: 73px repeat(8, 75px); width: 673px; }
  .app { display: grid; place-items: center; position: relative; }
  .app.task { padding-right: 5px; }
  .app.run::after { content: ''; position: absolute; left: 7px; right: 7px; bottom: 0; height: 3px; background: #76b9ed; }
  .app.active { background: #6e6e6e; } .app.active::after { left: 0; right: 0; }
  .tray { width: 361px; padding-left: 85px; display: grid; grid-template-columns: 36px 35px 38px 39px 40px 40px 42px; place-items: center start; justify-items: center; }
  .tray span { font-size: 22px; }
  .clock { width: 219px; display: grid; align-content: center; justify-items: center; line-height: 27px; font-size: 18px; letter-spacing: -.1px; padding-bottom: 2px; }
  .notify { position: relative; width: 71px; padding: 18px 0 0 17px; }
  .notify b { position: absolute; left: 28px; top: 29px; width: 24px; height: 24px; border-radius: 50%; background: #3a3a3f; border: 1px solid #aaa; text-align: center; line-height: 22px; font-size: 16px; font-weight: 700; }
  .peek { flex: 1; background: #2c2c36; border-left: 2px solid #77777c; }

  .menu { position: absolute; left: 298px; top: 63px; width: 389px; height: 716px; background: #f2f2f2; border: 1px solid #ccc; padding: 2px; color: #000; font-weight: 400; box-shadow: 4px 4px 5px rgba(0, 0, 0, .5); letter-spacing: .15px; }
  .item { height: 31px; display: flex; align-items: center; }
  .item i { width: 31px; height: 31px; margin-right: 10px; display: grid; place-items: center; flex: none; }
  .item .check { background: #91c9f7; }
  .item span { flex: 1; padding-bottom: 2px; } .item kbd { font: inherit; letter-spacing: .9px; margin-right: 22px; padding-bottom: 2px; } .item em { margin-right: 10px; }
  .off { color: #6d6d6d; } .hot { background: #90c8f6; }
  hr { height: 1px; border: 0; margin: 3px 0 3px 37px; background: #d0d0d0; }
  .sub { left: 681px; top: 611px; width: 275px; height: 99px; }
  .ime { position: absolute; left: 1627px; top: 871px; width: 293px; height: 38px; background: #fff; display: grid; grid-template-columns: 37px 29px 37px 29px 36px 32px 33px 1fr; align-items: center; padding-left: 32px; color: #1c74cb; }
  .ime span { font-weight: 600; font-size: 23px; } .logo { position: absolute; left: -18px; top: -4px; }
</style>
